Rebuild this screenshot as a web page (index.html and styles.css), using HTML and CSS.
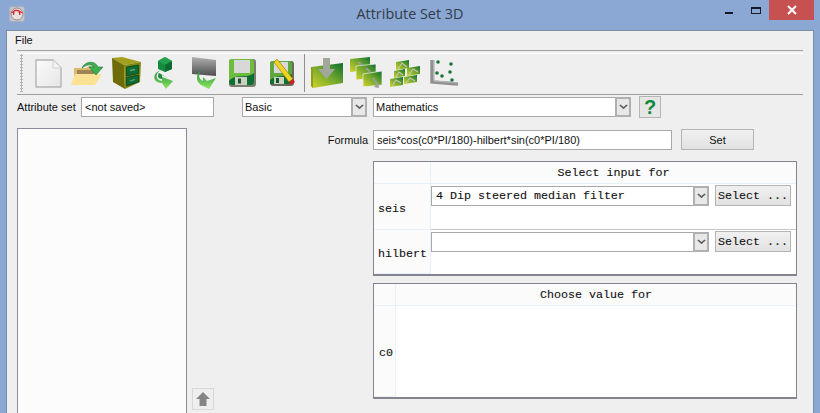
FILE: index.html
```html
<!DOCTYPE html>
<html lang="en">
  <head>
    <meta charset="UTF-8" />
    <title>Attribute Set 3D</title>
    <link rel="stylesheet" href="styles.css">
  </head>
  <body>
    <div class="titlebar">
      <svg class="app-icon" width="16" height="16" viewBox="0 0 16 16">
        <rect x="0.5" y="0.5" width="15" height="15" rx="2" fill="#c4c6cc" stroke="#a9aebb" />
        <circle cx="8" cy="8" r="6" fill="#e6e2e2" stroke="#a08a8c" />
        <path d="M2.5 7 L6 4.5 L9 4.5 L13.5 7 M5 5 L4.5 9 M10 5 L11 9" fill="none" stroke="#d8282e" stroke-width="1.3" />
      </svg>
      <div class="title">Attribute Set 3D</div>
      <div class="win-buttons">
        <span class="win-min"></span>
        <span class="win-max"></span>
        <span class="win-close">
          <svg width="10" height="10" viewBox="0 0 10 10"><path d="M1 1 L9 9 M9 1 L1 9" stroke="#fff" stroke-width="2" /></svg>
        </span>
      </div>
    </div>

    <div class="client">
      <div class="menubar"><span>File</span></div>

      <div class="toolbar">
        <div class="grip"></div>

        <!-- new -->
        <div class="tool">
          <svg width="38" height="38" viewBox="0 0 38 38">
            <defs>
              <linearGradient id="paper" x1="0" y1="0" x2="1" y2="1"><stop offset="0" stop-color="#fbfbfb" /><stop offset="1" stop-color="#e6e6e6" /></linearGradient>
              <linearGradient id="greenbar" x1="0" y1="1" x2="1" y2="0"><stop offset="0" stop-color="#d3d42a" /><stop offset="0.55" stop-color="#6ea52c" /><stop offset="1" stop-color="#0e6f30" /></linearGradient>
              <linearGradient id="arrow" x1="0" y1="0" x2="0" y2="1"><stop offset="0" stop-color="#1b8a3e" /><stop offset="1" stop-color="#8fe662" /></linearGradient>
              <linearGradient id="grey" x1="0" y1="0" x2="0" y2="1"><stop offset="0" stop-color="#b0b0b0" /><stop offset="1" stop-color="#4e4e4e" /></linearGradient>
            </defs>
            <path d="M7 6 H24 L32 14 V33 H7 Z" fill="url(#paper)" stroke="#b4b4b4" stroke-width="1.4" stroke-linejoin="round" />
            <path d="M24 6 V14 H32 Z" fill="#f4f4f4" stroke="#d0d0d0" />
          </svg>
        </div>

        <!-- open -->
        <div class="tool">
          <svg width="38" height="38" viewBox="0 0 38 38">
            <path d="M6 14 H18 L21 12 H28 V28 H6 Z" fill="#dcb96c" />
            <path d="M9 16 H26 V24 H9 Z" fill="#9d8456" />
            <path d="M3 31 L7 20 H34 L27 31 Z" fill="#fbe192" />
            <path d="M14 14 C17 7 27 6 30 13 L35 13 L28 21 L21 13 L26 13 C24 10 19 10 14 14 Z" fill="#3fae4e" stroke="#167a3a" stroke-width="0.6" />
          </svg>
        </div>

        <!-- cabinet -->
        <div class="tool">
          <svg width="38" height="38" viewBox="0 0 38 38">
            <path d="M5 4 L15 3 L34 8 L17 11 Z" fill="#a3a020" />
            <path d="M5 4 L17 11 L18 35 L6 28 Z" fill="#6d6c08" />
            <path d="M17 11 L34 8 L33 28 L18 35 Z" fill="#7f8a12" />
            <path d="M19.5 13 L31.5 11 V19.5 L19.5 22 Z M19.5 23.5 L31.5 21 V28 L19.5 32 Z" fill="#0f6b36" stroke="#053d1c" stroke-width="0.7" />
            <path d="M23 16.5 L28 15.5 M23 27 L28 25.5" stroke="#5ea877" stroke-width="1.3" />
          </svg>
        </div>

        <!-- restore -->
        <div class="tool">
          <svg width="38" height="38" viewBox="0 0 38 38">
            <path d="M12 7 L19 3 L26 7 V15 L19 18 L12 15 Z" fill="#138a3d" />
            <path d="M12 7 L19 11 L26 7 L19 3 Z" fill="#25a34c" />
            <path d="M19 11 V18 L26 15 V7 Z" fill="#0c6b31" />
            <path d="M15 16 C9 19 9 26 16 27 V23 L27 27 L20 35 L16 29 C6 29 6 19 15 16 Z" fill="url(#arrow)" />
            <path d="M13 19 C11 22 12 25 16 25 V21 L22 24 Z" fill="#1d8a40" />
          </svg>
        </div>

        <!-- grey surface, retrieve -->
        <div class="tool">
          <svg width="38" height="38" viewBox="0 0 38 38">
            <path d="M7 3 L31 6 V22 L7 20 Z" fill="url(#grey)" />
            <path d="M17 15 C13 19 13 25 18 27 V23 L22 27 L31 24 L24 35 L16 31 C10 27 11 19 17 15 Z" fill="url(#arrow)" />
          </svg>
        </div>

        <!-- save -->
        <div class="tool">
          <svg width="38" height="38" viewBox="0 0 38 38">
            <rect x="5" y="5" width="27" height="28" rx="3" fill="#7c7c70" />
            <rect x="5" y="5" width="25" height="26" rx="3" fill="#6ebc3e" />
            <rect x="10" y="6" width="16" height="13" fill="#d8d8d8" />
            <path d="M5 27 C12 19 22 25 30 19 V28 C30 31 28 31 27 31 H8 C6 31 5 30 5 27 Z" fill="#0e6f35" />
            <rect x="11" y="23" width="12" height="8" fill="#ccd0c2" />
            <rect x="14" y="24.5" width="3" height="5" fill="#14572c" />
          </svg>
        </div>

        <!-- save as -->
        <div class="tool">
          <svg width="38" height="38" viewBox="0 0 38 38">
            <rect x="7" y="7" width="24" height="25" rx="3" fill="#6a6a5e" />
            <rect x="7" y="7" width="22" height="23" rx="3" fill="#5fa83f" />
            <rect x="11" y="8" width="14" height="11" fill="#d8d8d8" />
            <path d="M7 26 C14 20 22 24 29 20 V30 H7 Z" fill="#0e6f35" />
            <rect x="11" y="23" width="10" height="7" fill="#ccd0c2" />
            <rect x="13" y="24" width="3" height="5" fill="#14572c" />
            <path d="M11 8 L14 5 L30 25 L26 28 Z" fill="#f2d21c" stroke="#8a7410" stroke-width="0.6" />
            <path d="M26 28 L30 25 L32 28 L28 31 Z" fill="#d01f2b" />
          </svg>
        </div>

        <div class="tool-sep"></div>

        <!-- import cube -->
        <div class="tool">
          <svg width="38" height="38" viewBox="0 0 38 38">
            <path d="M3 13 L35 9 V29 L5 34 L3 32 Z" fill="url(#greenbar)" />
            <path d="M3 13 L5 15 V34 L3 32 Z" fill="#8f9a18" />
            <path d="M15 4 H22 V15 H27 L18.5 25 L10 15 H15 Z" fill="#a2a79c" />
          </svg>
        </div>

        <!-- multi slice -->
        <div class="tool">
          <svg width="38" height="38" viewBox="0 0 38 38">
            <path d="M3 5 L23 3 V16 L3 18 Z" fill="url(#greenbar)" />
            <path d="M9 12 L29 10 V24 L9 26 Z" fill="url(#greenbar)" stroke="#f2f2f2" stroke-width="0.7" />
            <path d="M16 20 L35 17 V31 L16 33 Z" fill="url(#greenbar)" stroke="#f2f2f2" stroke-width="0.7" />
            <path d="M11 8 L15 11 M19 14 L23 18 M26 24 L31 31" stroke="#9a9f96" stroke-width="2" />
            <path d="M31 28 L32 34 L27 33 Z" fill="#9a9f96" />
          </svg>
        </div>

        <!-- sub cubes -->
        <div class="tool">
          <svg width="38" height="38" viewBox="0 0 38 38">
            <path d="M10 8 L23 6 V14 L10 16 Z" fill="url(#greenbar)" />
            <path d="M8 17 L19 15 V22 L8 24 Z" fill="url(#greenbar)" />
            <path d="M21 14 L34 12 V20 L21 22 Z" fill="url(#greenbar)" />
            <path d="M4 25 L17 23 V31 L4 33 Z" fill="url(#greenbar)" />
            <path d="M18 23 L31 21 V28 L18 30 Z" fill="url(#greenbar)" />
            <path d="M12 15 L16 9 L21 13 M10 23 L13 18 L17 21 M23 21 L27 15 L32 18 M6 32 L10 26 L15 29 M20 29 L24 24 L29 27" fill="none" stroke="#c4c6bc" stroke-width="1.1" />
          </svg>
        </div>

        <!-- crossplot -->
        <div class="tool">
          <svg width="38" height="38" viewBox="0 0 38 38">
            <path d="M7 6 V28 L33 30" fill="none" stroke="#909090" stroke-width="3.4" />
            <path d="M9 6 V27 L33 29" fill="none" stroke="#b4b4b4" stroke-width="1.2" />
            <g fill="#17743a">
              <circle cx="13" cy="8" r="1.8" />
              <circle cx="26" cy="10" r="1.8" />
              <circle cx="12" cy="19" r="1.8" />
              <circle cx="25" cy="18" r="1.8" />
              <circle cx="17" cy="22" r="1.8" />
              <circle cx="27" cy="26" r="1.8" />
            </g>
          </svg>
        </div>
      </div>

      <div class="set-row">
        <label class="set-label">Attribute set</label>
        <input class="field set-name" type="text" value="&lt;not saved&gt;" />
        <div class="combo combo-basic"><span class="combo-text">Basic</span><span class="combo-btn"></span></div>
        <div class="combo combo-math"><span class="combo-text">Mathematics</span><span class="combo-btn"></span></div>
        <button class="help-btn">?</button>
      </div>

      <div class="main">
        <div class="attr-list"></div>

        <div class="move-col">
          <button class="up-btn">
            <svg width="16" height="16" viewBox="0 0 16 16"><path d="M8 1 L15 8 H11.5 V15 H4.5 V8 H1 Z" fill="#858585" /></svg>
          </button>
        </div>

        <div class="editor">
          <div class="formula-row">
            <label class="formula-label">Formula</label>
            <input class="field formula" type="text" value="seis*cos(c0*PI/180)-hilbert*sin(c0*PI/180)" />
            <button class="set-btn">Set</button>
          </div>

          <div class="grid grid-input">
            <div class="corner"></div>
            <div class="col-head">Select input for</div>

            <div class="row-head">seis</div>
            <div class="cell">
              <div class="combo combo-mono"><span class="combo-text">4 Dip steered median filter</span><span class="combo-btn"></span></div>
              <button class="select-btn">Select ...</button>
            </div>

            <div class="row-head">hilbert</div>
            <div class="cell cell-last">
              <div class="combo combo-mono"><span class="combo-text"></span><span class="combo-btn"></span></div>
              <button class="select-btn">Select ...</button>
            </div>
          </div>

          <div class="grid grid-value">
            <div class="corner"></div>
            <div class="col-head">Choose value for</div>
            <div class="row-head">c0</div>
            <div class="cell cell-last"></div>
          </div>
        </div>
      </div>
    </div>
  </body>
</html>
```

FILE: styles.css
```css
html,
body {
  margin: 0;
  height: 100%;
  overflow: hidden;
}
body {
  background-color: #8aa8d3;
  font-family: "Liberation Sans", Arial, sans-serif;
  font-size: 11px;
  color: #111;
}

/* title bar */
.titlebar {
  display: flex;
  align-items: flex-start;
  height: 30px;
  position: relative;
}
.app-icon {
  margin: 6px 0 0 9px;
}
.title {
  position: absolute;
  left: 0;
  top: 5px;
  width: 820px;
  text-align: center;
  font-family: "Open Sans", sans-serif;
  font-size: 14.4px;
  line-height: 18px;
  color: #333c48;
}
.win-buttons {
  margin-left: auto;
  margin-right: 6px;
  display: flex;
  align-items: flex-start;
}
.win-min {
  width: 8px;
  height: 2px;
  background: #111a28;
  margin: 12px 18px 0 0;
}
.win-max {
  width: 8px;
  height: 4px;
  border: 1px solid #111a28;
  border-top-width: 2px;
  margin: 7px 8px 0 0;
}
.win-close {
  width: 45px;
  height: 20px;
  background: #c75050;
  display: flex;
  align-items: center;
  justify-content: center;
}

/* client area */
.client {
  margin: 0 6px 0 6px;
  height: 383px;
  box-sizing: border-box;
  background: #efefef;
  border: 1px solid #7c8ca6;
  border-bottom: none;
  padding-left: 10px;
}
.menubar {
  height: 19px;
  line-height: 18px;
  margin-left: -10px;
  padding-left: 8px;
}
.toolbar {
  display: flex;
  align-items: flex-start;
  height: 40px;
  margin-right: 10px;
  padding-top: 3px;
  border-top: 1px solid #a0a0a0;
  border-bottom: 1px solid #a0a0a0;
  box-shadow: inset 0 2px 0 #efefef, inset 0 3px 0 #fff;
}
.grip {
  width: 3px;
  height: 38px;
  margin: 0 6px 0 3px;
  background-image: radial-gradient(#b4b4b4 1px, transparent 1.2px);
  background-size: 3px 3px;
}
.tool {
  width: 39px;
  height: 38px;
  flex: none;
}
.tool svg {
  display: block;
}
.tool-sep {
  width: 1px;
  height: 38px;
  margin: 0 3px 0 2px;
  background: #8f8f8f;
}

/* attribute set row */
.set-row {
  display: flex;
  align-items: flex-start;
  height: 20px;
  margin-top: 2px;
}
.set-label {
  line-height: 20px;
  width: 64px;
}
.field {
  box-sizing: border-box;
  height: 20px;
  margin: 0;
  padding: 0 3px;
  border: 1px solid #a8a8a8;
  border-radius: 0;
  background: #fff;
  color: #111;
  font-family: "Liberation Sans", Arial, sans-serif;
  font-size: 11px;
  outline: none;
}
.set-name {
  width: 133px;
}
.combo {
  box-sizing: border-box;
  display: flex;
  height: 20px;
  border: 1px solid #a8a8a8;
  background: #fff;
}
.combo-text {
  flex: 1;
  padding-left: 2px;
  line-height: 18px;
  overflow: hidden;
  white-space: nowrap;
}
.combo-btn {
  box-sizing: border-box;
  width: 16px;
  border: 2px solid #b0b0b0;
  margin: -1px -1px -1px 0;
  background: #e8e8e8;
  position: relative;
}
.combo-btn::after {
  content: "";
  position: absolute;
  left: 3px;
  top: 3px;
  width: 5px;
  height: 5px;
  border-right: 2px solid #5c5c5c;
  border-bottom: 2px solid #5c5c5c;
  transform: scale(0.85, 0.7) rotate(45deg);
}
.combo-basic {
  width: 125px;
  margin-left: 28px;
}
.combo-math {
  width: 258px;
  margin-left: 6px;
}
.help-btn {
  box-sizing: border-box;
  width: 22px;
  height: 22px;
  margin: -1px 0 0 8px;
  padding: 0;
  border: 1px solid #b4b4b4;
  background: #e6e6e6;
  color: #11893c;
  font-family: "Liberation Sans", Arial, sans-serif;
  font-size: 20px;
  font-weight: bold;
  line-height: 20px;
}

/* lower part */
.main {
  display: flex;
  align-items: flex-start;
  margin-top: 11px;
}
.attr-list {
  box-sizing: border-box;
  width: 170px;
  height: 300px;
  flex: none;
  background: #fcfcfc;
  border: 1px solid #8b8b9d;
}
.move-col {
  width: 186px;
  flex: none;
  padding: 260px 0 0 5px;
  box-sizing: border-box;
}
.up-btn {
  box-sizing: border-box;
  display: block;
  width: 22px;
  height: 22px;
  padding: 2px;
  border: 1px solid #d8d8d8;
  background: #eeeeee;
}
.up-btn svg {
  display: block;
}
.editor {
  width: 424px;
  flex: none;
}
.formula-row {
  display: flex;
  align-items: flex-start;
  height: 31px;
  margin-left: -60px;
  padding-top: 2px;
}
.formula-label {
  width: 55px;
  text-align: right;
  line-height: 20px;
  margin-right: 5px;
}
.formula {
  width: 299px;
}
.set-btn {
  box-sizing: border-box;
  width: 73px;
  height: 21px;
  margin: -1px 0 0 9px;
  padding: 0;
  border: 1px solid #b4b4b4;
  background: linear-gradient(#f0f0f0, #e2e2e2);
  font-family: "Liberation Sans", Arial, sans-serif;
  font-size: 11px;
  color: #111;
}

/* grids */
.grid {
  box-sizing: border-box;
  display: grid;
  background: #fff;
  border: 1px solid #84848f;
  border-bottom-width: 2px;
  font-family: "Liberation Mono", "Courier New", monospace;
  font-size: 11.67px;
  color: #111;
  -webkit-text-stroke: 0.1px #111;
}
.grid-input {
  height: 115px;
  grid-template-columns: 57px 1fr;
  grid-template-rows: 22px 46px 1fr;
}
.grid-value {
  height: 116px;
  margin-top: 7px;
  grid-template-columns: 22px 1fr;
  grid-template-rows: 22px 1fr;
}
.corner,
.col-head,
.row-head {
  background: #fbfbfb;
  border-right: 1px solid #e8f0fa;
  border-bottom: 1px solid #e8f0fa;
}
.col-head {
  border-right: none;
  text-align: center;
  line-height: 22px;
}
.row-head {
  display: flex;
  align-items: center;
  padding: 4px 0 0 4px;
  overflow: hidden;
}
.grid-value .row-head {
  padding-left: 5px;
}
.cell {
  display: flex;
  align-items: flex-start;
  padding-top: 1px;
  box-sizing: border-box;
  border-bottom: 1px solid #c8c8c8;
}
.cell-last {
  border-bottom: none;
}
.combo-mono {
  width: 278px;
  margin-top: 1px;
}
.combo-mono .combo-text {
  padding-left: 4px;
}
.select-btn {
  box-sizing: border-box;
  width: 76px;
  height: 21px;
  margin: 0 0 0 6px;
  padding: 0;
  border: 1px solid #b4b4b4;
  background: linear-gradient(#f0f0f0, #e2e2e2);
  font-family: "Liberation Mono", "Courier New", monospace;
  font-size: 11.67px;
  color: #111;
  -webkit-text-stroke: 0.1px #111;
}
```
